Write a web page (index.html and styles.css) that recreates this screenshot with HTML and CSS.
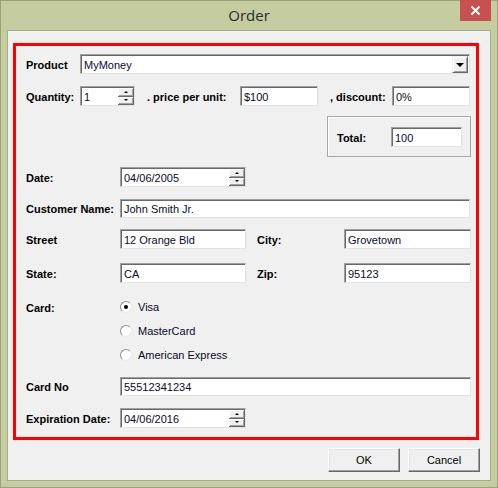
FILE: index.html
```html
<!DOCTYPE html>
<html>
<head>
<meta charset="utf-8">
<link rel="stylesheet" href="styles.css">
</head>
<body>
<div class="window">
  <div class="titlebar">
    <span class="title">Order</span>
    <div class="close"><svg width="11" height="11" viewBox="0 0 11 11"><path d="M1.5 1.5 L9.5 9.5 M9.5 1.5 L1.5 9.5" stroke="#fff" stroke-width="2" fill="none"/></svg></div>
  </div>
  <div class="client">
    <div class="redbox">
      <div class="row r-product">
        <label class="lbl w54">Product</label>
        <div class="field combo"><span class="val">MyMoney</span><div class="dropbtn"><span class="tri-down big"></span></div></div>
      </div>
      <div class="row r-qty">
        <label class="lbl w54">Quantity:</label>
        <div class="field spin w55"><span class="val">1</span><div class="spinbtns"><div class="sb"><span class="tri-up"></span></div><div class="sb"><span class="tri-down"></span></div></div></div>
        <label class="lbl ml12 w93">. price per unit:</label>
        <div class="field w78"><span class="val">$100</span></div>
        <label class="lbl ml12 w62">, discount:</label>
        <div class="field w78"><span class="val">0%</span></div>
      </div>
      <div class="row r-total">
        <div class="group">
          <label class="lbl w54">Total:</label>
          <div class="field w71"><span class="val">100</span></div>
        </div>
      </div>
      <div class="row r-date">
        <label class="lbl w94">Date:</label>
        <div class="field spin w126"><span class="val">04/06/2005</span><div class="spinbtns"><div class="sb"><span class="tri-up"></span></div><div class="sb"><span class="tri-down"></span></div></div></div>
      </div>
      <div class="row r-cust">
        <label class="lbl w94">Customer Name:</label>
        <div class="field w350 h19"><span class="val">John Smith Jr.</span></div>
      </div>
      <div class="row r-street">
        <label class="lbl w94">Street</label>
        <div class="field w126"><span class="val">12 Orange Bld</span></div>
        <label class="lbl ml11 w87">City:</label>
        <div class="field w127"><span class="val">Grovetown</span></div>
      </div>
      <div class="row r-state">
        <label class="lbl w94">State:</label>
        <div class="field w126"><span class="val">CA</span></div>
        <label class="lbl ml11 w87">Zip:</label>
        <div class="field w127"><span class="val">95123</span></div>
      </div>
      <div class="row r-visa">
        <label class="lbl w94">Card:</label>
        <div class="radio"><span class="circle checked"></span><span class="rtext">Visa</span></div>
      </div>
      <div class="row r-mc">
        <div class="spacer94"></div>
        <div class="radio"><span class="circle"></span><span class="rtext">MasterCard</span></div>
      </div>
      <div class="row r-amex">
        <div class="spacer94"></div>
        <div class="radio"><span class="circle"></span><span class="rtext">American Express</span></div>
      </div>
      <div class="row r-cardno">
        <label class="lbl w94">Card No</label>
        <div class="field w351 h19"><span class="val">55512341234</span></div>
      </div>
      <div class="row r-exp">
        <label class="lbl w94">Expiration Date:</label>
        <div class="field spin w126"><span class="val">04/06/2016</span><div class="spinbtns"><div class="sb"><span class="tri-up"></span></div><div class="sb"><span class="tri-down"></span></div></div></div>
      </div>
    </div>
    <div class="buttons">
      <button class="btn">OK</button>
      <button class="btn">Cancel</button>
    </div>
  </div>
</div>
</body>
</html>
```

FILE: styles.css
```css
html, body {
  margin: 0;
  padding: 0;
}
body {
  width: 498px;
  height: 488px;
  overflow: hidden;
  font-family: "Liberation Sans", Arial, sans-serif;
  font-size: 11px;
  color: #000;
}
.window {
  box-sizing: border-box;
  width: 498px;
  height: 488px;
  background: #c5cda0;
  border: 1px solid #9aa27a;
  display: flex;
  flex-direction: column;
}
.titlebar {
  height: 29px;
  position: relative;
  display: flex;
  align-items: center;
  justify-content: center;
}
.title {
  font-family: "Open Sans", "Noto Sans", sans-serif;
  font-size: 15px;
  color: #2b2b2b;
  margin-top: -1px;
}
.close {
  position: absolute;
  right: 6px;
  top: -1px;
  width: 31px;
  height: 21px;
  background: #c75050;
  display: flex;
  align-items: center;
  justify-content: center;
}
.client {
  box-sizing: border-box;
  margin: 0 6px 6px 6px;
  flex: 1;
  background: #f0f0f0;
  border: 1px solid #a6ad88;
  padding: 12px 10px 0 5px;
  display: flex;
  flex-direction: column;
}
.redbox {
  box-sizing: border-box;
  width: 466px;
  height: 397px;
  border: 3px solid #ff0000;
  padding: 0 0 0 10px;
  display: flex;
  flex-direction: column;
}
.row {
  display: flex;
  align-items: center;
  height: 20px;
  flex: none;
}
.r-product { margin-top: 8px; }
.r-qty { margin-top: 12px; }
.r-total { margin-top: 10px; height: 41px; justify-content: flex-end; padding-right: 5px; }
.r-date { margin-top: 10px; }
.r-cust { margin-top: 12px; height: 19px; }
.r-street { margin-top: 11px; }
.r-state { margin-top: 14px; }
.r-visa { margin-top: 15px; height: 18px; }
.r-mc { margin-top: 6px; height: 18px; }
.r-amex { margin-top: 6px; height: 18px; }
.r-cardno { margin-top: 13px; height: 19px; }
.r-exp { margin-top: 12px; }

.lbl {
  font-weight: bold;
  white-space: nowrap;
  flex: none;
  padding-top: 1px;
}
.w54 { width: 54px; }
.w93 { width: 93px; }
.w62 { width: 62px; }
.w94 { width: 94px; }
.w87 { width: 87px; }
.ml12 { margin-left: 12px; }
.ml11 { margin-left: 11px; }
.spacer94 { width: 94px; flex: none; }

.field {
  box-sizing: border-box;
  height: 20px;
  background: #fff;
  border-top: 1px solid #a0a0a0;
  border-left: 1px solid #a0a0a0;
  border-right: 1px solid #e3e3e3;
  border-bottom: 1px solid #e3e3e3;
  box-shadow: inset 1px 1px 0 #696969;
  display: flex;
  align-items: center;
  position: relative;
  flex: none;
}
.h19 { height: 19px; }
.val {
  padding-left: 3px;
  padding-top: 1px;
  white-space: nowrap;
  color: #0a0a2a;
}
.combo { width: 390px; }
.w55 { width: 55px; }
.w78 { width: 78px; }
.w71 { width: 71px; }
.w126 { width: 126px; }
.w127 { width: 127px; }
.w350 { width: 350px; }
.w351 { width: 351px; }

.dropbtn {
  position: absolute;
  right: 1px;
  top: 1px;
  bottom: 0;
  width: 16px;
  box-sizing: border-box;
  background: #f0f0f0;
  border-top: 1px solid #f0f0f0;
  border-left: 1px solid #f0f0f0;
  border-right: 1px solid #696969;
  border-bottom: 1px solid #696969;
  box-shadow: inset 1px 1px 0 #fff, inset -1px -1px 0 #a0a0a0;
  display: flex;
  align-items: center;
  justify-content: center;
}
.spinbtns {
  position: absolute;
  right: 0;
  top: 1px;
  bottom: 0;
  width: 16px;
  display: flex;
  flex-direction: column;
}
.sb {
  flex: 1;
  box-sizing: border-box;
  background: #f0f0f0;
  border-right: 1px solid #696969;
  border-bottom: 1px solid #696969;
  box-shadow: inset 1px 1px 0 #fff, inset -1px -1px 0 #a0a0a0;
  display: flex;
  align-items: center;
  justify-content: center;
}
.tri-up {
  width: 0;
  height: 0;
  border-left: 2px solid transparent;
  border-right: 2px solid transparent;
  border-bottom: 2px solid #000;
}
.tri-down {
  width: 0;
  height: 0;
  border-left: 2px solid transparent;
  border-right: 2px solid transparent;
  border-top: 2px solid #000;
}
.tri-down.big {
  border-left-width: 4px;
  border-right-width: 4px;
  border-top-width: 4px;
  margin-top: 1px;
}

.group {
  box-sizing: border-box;
  width: 144px;
  height: 41px;
  border: 1px solid #a8a8a8;
  box-shadow: inset 1px 1px 0 #fff;
  display: flex;
  align-items: center;
  padding-left: 9px;
  padding-top: 1px;
}

.radio {
  display: flex;
  align-items: center;
}
.circle {
  box-sizing: border-box;
  width: 12px;
  height: 12px;
  border-radius: 50%;
  background: #fff;
  border: 1px solid #8f8f8f;
  border-right-color: #e8e8e8;
  border-bottom-color: #e8e8e8;
  position: relative;
}
.circle.checked::after {
  content: "";
  position: absolute;
  left: 3px;
  top: 3px;
  width: 4px;
  height: 4px;
  border-radius: 50%;
  background: #000;
}
.rtext {
  margin-left: 6px;
  color: #0a0a2a;
}

.buttons {
  display: flex;
  justify-content: flex-end;
  gap: 8px;
  margin-top: 8px;
}
.btn {
  box-sizing: border-box;
  width: 72px;
  height: 24px;
  background: #f0f0f0;
  border-top: 1px solid #fff;
  border-left: 1px solid #fff;
  border-right: 1px solid #696969;
  border-bottom: 1px solid #696969;
  box-shadow: inset -1px -1px 0 #a0a0a0, inset 1px 1px 0 #e3e3e3;
  font-family: "Liberation Sans", Arial, sans-serif;
  font-size: 11px;
  color: #000;
  padding: 0;
}
```
